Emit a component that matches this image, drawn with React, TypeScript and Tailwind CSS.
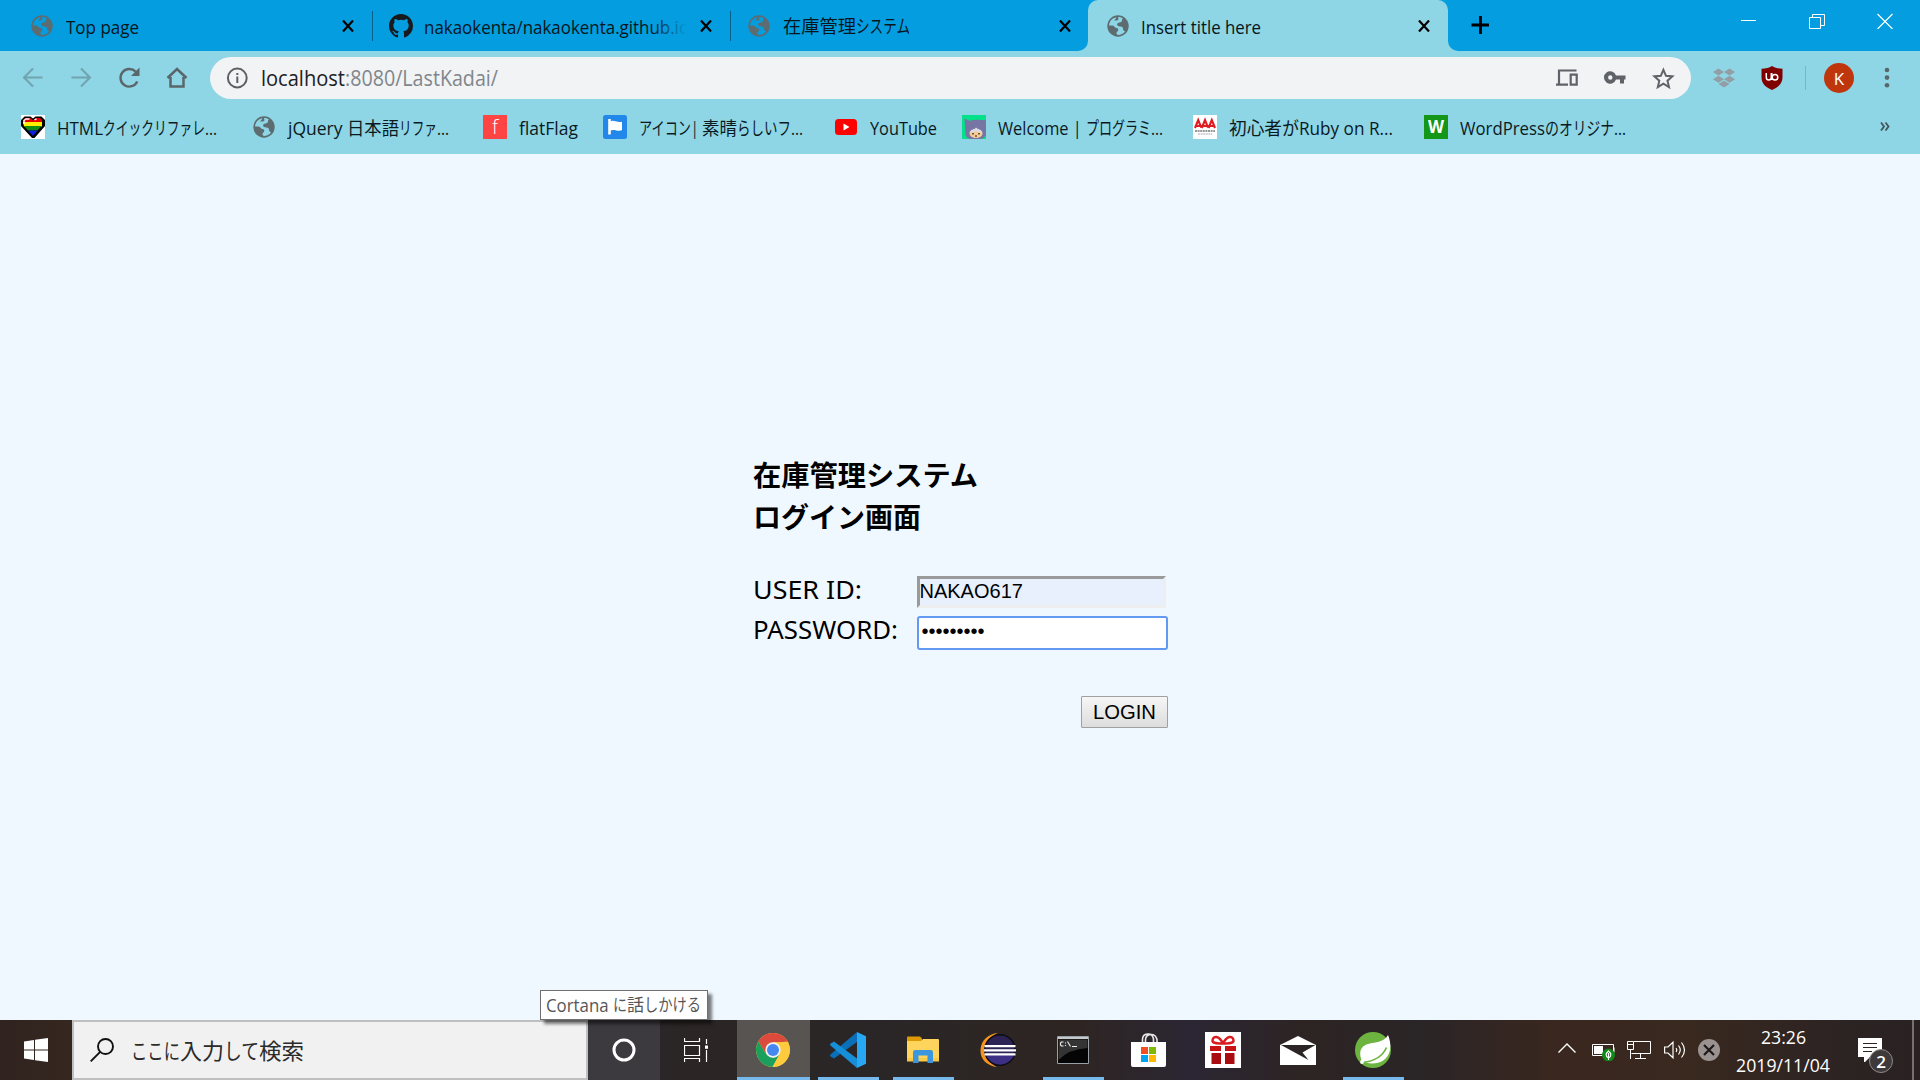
import React, { useLayoutEffect, useRef } from 'react';

/* One text run, condensed or widened to fill the width that its class sets. */
function Run({ t, className = '' }: { t: string; className?: string }) {
  const outer = useRef<HTMLSpanElement>(null);
  const inner = useRef<HTMLSpanElement>(null);
  useLayoutEffect(() => {
    const o = outer.current;
    const i = inner.current;
    if (!o || !i) return;
    i.style.transform = 'none';
    const w = i.getBoundingClientRect().width;
    if (w > 0) i.style.transform = `scaleX(${o.clientWidth / w})`;
  }, []);
  return (
    <span ref={outer} className={`block shrink-0 ${className}`}>
      <span ref={inner} className="inline-block origin-left whitespace-pre">{t}</span>
    </span>
  );
}

const ui = "font-['Open_Sans','Noto_Sans_CJK_JP',sans-serif]";

function Icon({ children, className = '', box = '0 0 24 24' }: { children: React.ReactNode; className?: string; box?: string }) {
  return (
    <svg viewBox={box} className={`block shrink-0 ${className}`} fill="none">
      {children}
    </svg>
  );
}

function Globe({ land = '#8ed5e5' }: { land?: string }) {
  return (
    <Icon className="size-6">
      <circle cx="12" cy="12" r="10.7" fill="#5d6c71" />
      <path
        d="M10.2 3.2C6.300 4 3.300 7.300 3 11.500h3.500c2 0 2.200 2.600 4.200 2.600 1.300 0 1.500 1 1.500 2.100 0 1.300-1.700 1.200-1.700 2.700 0 1 .7 1.700 1.500 2 2.700 0 5.400-1.400 7-3.500-1.400-.5-2-1.500-2-2.800 0-1.500-1.200-2.100-2.500-2.200-2-.1-3.300-.4-3.400-2 0-1.300 1.200-1.900 2.200-2 1.700-.2 2.500-.8 2.700-2 .1-.9.200-1.600.9-2.100-1.500-.9-3.300-1.400-4.900-1.400l.4 1.800c.1 1-.6 1.700-1.700 1.700H8.400V6c.8-.5 1.500-1.500 1.800-2.800z"
        fill={land}
      />
    </Icon>
  );
}

function Close() {
  return (
    <Icon className="size-3" box="0 0 12 12">
      <path d="M1 .5l10 11M11 .5L1 11.500" stroke="#000" strokeWidth="2.200" />
    </Icon>
  );
}

function Tabs() {
  return (
    <div className={`flex h-[51px] bg-[#039de0] text-[18px] leading-6 text-[#06161c] ${ui}`}>
      <div className="flex w-[372px] items-center pr-[18px] pl-[30px]">
        <Globe land="#039de0" />
        <Run t="Top page" className="ml-3 w-[73px] pt-0.5" />
        <div className="ml-auto"><Close /></div>
      </div>
      <div className="mt-[11px] h-[30px] w-px bg-[#08608a]" />
      <div className="flex w-[357px] items-center pr-[18px] pl-4">
        <Icon className="size-6" box="0 0 16 16">
          <path
            fill="#181a1d"
            d="M8 0C3.580 0 0 3.580 0 8c0 3.540 2.290 6.530 5.470 7.590.4.070.55-.17.55-.38 0-.19-.01-.82-.01-1.490-2.010.37-2.530-.49-2.690-.94-.09-.23-.48-.94-.82-1.130-.28-.15-.68-.52-.01-.53.63-.01 1.080.58 1.230.82.72 1.210 1.870.87 2.330.66.070-.52.280-.87.510-1.070-1.780-.2-3.640-.89-3.640-3.950 0-.87.310-1.590.82-2.150-.08-.2-.36-1.020.08-2.120 0 0 .67-.21 2.200.82a7.600 7.600 0 0 1 4 0c1.530-1.040 2.200-.82 2.200-.82.44 1.100.16 1.920.08 2.120.51.56.82 1.270.82 2.150 0 3.070-1.870 3.750-3.650 3.950.29.25.54.73.54 1.480 0 1.070-.01 1.930-.01 2.200 0 .21.150.46.550.38A8.010 8.010 0 0 0 16 8c0-4.420-3.580-8-8-8z"
          />
        </Icon>
        <div className="relative ml-[11px] pt-0.5">
          <Run t="nakaokenta/nakaokenta.github.ic" className="w-[263px]" />
          <div className="absolute top-0 right-0 h-7 w-9 bg-gradient-to-r from-transparent to-[#039de0]" />
        </div>
        <div className="ml-auto"><Close /></div>
      </div>
      <div className="mt-[11px] h-[30px] w-px bg-[#08608a]" />
      <div className="flex h-[51px] w-[357px] items-center pr-[17px] pl-4">
        <Globe land="#039de0" />
        <div className="ml-3 flex pt-px text-[18px]">
          <Run t="在庫管理" className="w-[73px]" />
          <Run t="システム" className="w-[54px]" />
        </div>
        <div className="ml-auto"><Close /></div>
      </div>
      <div className="flex w-[360px] items-center bg-[#8ed5e5] pr-[18px] pl-[18px]">
        <Globe />
        <Run t="Insert title here" className="ml-[11px] w-[120px] pt-0.5" />
        <div className="ml-auto"><Close /></div>
      </div>
      <div className="flex flex-1 bg-[#8ed5e5]">
        <div className="flex flex-1 items-start rounded-bl-[10px] bg-[#039de0]">
          <Icon className="mt-4 ml-[23px] size-[18px]" box="0 0 18 18">
            <path d="M9.500 0v18M.5 9h18" stroke="#000" strokeWidth="2.800" />
          </Icon>
          <Icon className="mt-[13px] ml-auto h-4 w-4" box="0 0 16 16">
            <path d="M0 7.500h15" stroke="#fff" />
          </Icon>
          <Icon className="mt-[13px] ml-[52px] h-4 w-4" box="0 0 16 16">
            <path d="M.5 4.500h11v11H.5zM3.500 4.500v-3h12v11h-4" stroke="#fff" />
          </Icon>
          <Icon className="mt-[13px] mr-[27px] ml-[52px] h-4 w-4" box="0 0 16 16">
            <path d="M.5 1l15 15M15.500 1L.5 16" stroke="#fff" strokeWidth="1.200" />
          </Icon>
        </div>
      </div>
    </div>
  );
}

/* Rounded outside corners where the active tab meets the strip. */
function TabCorners() {
  return (
    <>
      <Icon className="absolute top-0 left-[1088px] h-[51px] w-[10px]" box="0 0 10 51">
        <path d="M0 0h10A10 10 0 0 0 0 10z" fill="#039de0" />
      </Icon>
      <Icon className="absolute top-0 left-[1078px] h-[51px] w-[10px]" box="0 0 10 51">
        <path d="M10 41v10H0a10 10 0 0 0 10-10z" fill="#8ed5e5" />
      </Icon>
      <Icon className="absolute top-0 left-[1438px] h-[51px] w-[10px]" box="0 0 10 51">
        <path d="M0 0h10v10A10 10 0 0 0 0 0z" fill="#039de0" />
      </Icon>
    </>
  );
}

function Toolbar() {
  return (
    <div className={`flex h-[54px] items-center bg-[#8ed5e5] pl-[21px] ${ui}`}>
      <Icon className="size-6"><path d="M21.500 11.500H3M12 2.500l-9 9 9 9" stroke="#70a4ae" strokeWidth="2.100" /></Icon>
      <Icon className="ml-6 size-6"><path d="M2.500 11.500H21M12 2.500l9 9-9 9" stroke="#70a4ae" strokeWidth="2.100" /></Icon>
      <Icon className="ml-6 size-6">
        <path d="M20.300 15.500a8.800 8.800 0 1 1-1.600-9.800" stroke="#5b666b" strokeWidth="2.400" />
        <path d="M22.500 1.500v8.500H14z" fill="#5b666b" />
      </Icon>
      <Icon className="ml-6 size-6">
        <path d="M5.500 11v9.500h13V11M2.500 12L12 3l9.500 9" stroke="#5b666b" strokeWidth="2.500" />
      </Icon>
      <div className="ml-[21px] flex h-[42px] w-[1481px] items-center rounded-full bg-[#f1f3f5] pl-[15px] text-[21px] leading-[28px]">
        <Icon className="size-6">
          <circle cx="12.300" cy="12" r="9.400" stroke="#5b6065" strokeWidth="2" />
          <path d="M12.300 10.500v6.500M12.300 7v2" stroke="#5b6065" strokeWidth="2" />
        </Icon>
        <Run t="localhost" className="ml-3 w-[84px] text-[#202124]" />
        <Run t=":8080/LastKadai/" className="w-[153px] text-[#80868b]" />
        <Icon className="ml-auto size-6">
          <path d="M21.500 4.500H4v14M1 18.600h12" stroke="#5f6368" strokeWidth="2.200" />
          <path d="M15.700 8.600h6v10h-6z" stroke="#5f6368" strokeWidth="2.200" />
        </Icon>
        <Icon className="ml-6 size-6">
          <path d="M13 9.500A6.200 6.200 0 1 0 13 13.500H17v4h4v-4h1.500v-4zM7.300 13.700a2.200 2.200 0 1 1 0-4.400 2.200 2.200 0 0 1 0 4.400z" fill="#5f6368" fillRule="evenodd" />
        </Icon>
        <Icon className="mr-4 ml-6 size-6">
          <path d="M12.400 3.800l2.600 6 6.400.6-4.900 4.300 1.500 6.400-5.600-3.400-5.600 3.400 1.500-6.400-4.900-4.300 6.400-.6z" stroke="#5f6368" strokeWidth="2" />
        </Icon>
      </div>
      <Icon className="ml-[21px] size-6">
        <path d="M6.500 2.500l5.500 3.500-5.500 3.500L1 6zM17.500 2.500L23 6l-5.500 3.500L12 6zM6.500 9.800l5.500 3.500-5.500 3.500L1 13.300zM17.500 9.800l5.500 3.500-5.500 3.500-5.500-3.500zM12 14.800l5.500 3.200-5.500 3.500L6.500 18z" fill="#929ea3" />
      </Icon>
      <Icon className="ml-6 size-6">
        <path d="M12 0c3 2 6 2.700 10.500 2.700V11c0 6-3.500 10-10.500 13C5 21 1.500 17 1.500 11V2.700C6 2.700 9 2 12 0z" fill="#800000" />
        <path d="M6.300 7v4.500a2.500 2.500 0 0 0 5 0V7M11.800 7v7" stroke="#fff" strokeWidth="1.500" />
        <circle cx="15" cy="11.300" r="2.800" stroke="#fff" strokeWidth="1.500" />
      </Icon>
      <div className="ml-[21px] h-6 w-px bg-[#79b4c0]" />
      <div className="ml-[18px] flex size-[30px] items-center justify-center rounded-full bg-[#bf360c] text-[17px] leading-none text-white">K</div>
      <Icon className="ml-[21px] size-6">
        <circle cx="12" cy="4" r="2.300" fill="#5b666b" />
        <circle cx="12" cy="11.600" r="2.300" fill="#5b666b" />
        <circle cx="12" cy="19.200" r="2.300" fill="#5b666b" />
      </Icon>
    </div>
  );
}

function Heart() {
  return (
    <Icon className="size-6">
      <path d="M0 0h24v24H0z" fill="#fff" />
      <path d="M3.500 1.500h6l2.500 2 2.500-2h6L24 5v6L13.500 23h-2.500L0 11V5z" fill="#000" />
      <path d="M4 3h5.500L12 5.500 14.500 3H19l2 2v2H2V5z" fill="#e80000" />
      <path d="M2 7h19v4.500H3z" fill="#ffee00" />
      <path d="M3 11h17.500l-4 4.500H7z" fill="#128c12" />
      <path d="M7 15.500h9.500L12 21z" fill="#1020dd" />
      <path d="M3 9V5.500L5 4h3.500M13.500 5l2-1.200" stroke="#fff" strokeWidth="1.400" />
    </Icon>
  );
}

function Bookmarks() {
  const dots = <Run t="..." className="w-[12px]" />;
  return (
    <div className={`flex h-[49px] bg-[#8ed5e5] pl-[21px] text-[18px] leading-6 text-[#0b1a1f] ${ui}`}>
      <div className="flex w-[231px] items-center pb-1.5">
        <Heart />
        <div className="ml-3 flex pt-0.5">
          <Run t="HTML" className="w-[46px]" />
          <Run t="クイックリファレ" className="w-[102px]" />
          {dots}
        </div>
      </div>
      <div className="flex w-[231px] items-center pb-1.5">
        <Globe />
        <div className="ml-3 flex pt-0.5">
          <Run t="jQuery " className="w-[59px]" />
          <Run t="日本語" className="w-[52px]" />
          <Run t="リファ" className="w-[38px]" />
          {dots}
        </div>
      </div>
      <div className="flex w-[120px] items-center pb-1.5">
        <div className="flex size-6 items-center justify-center bg-[#ff4444] text-[20px] leading-6 font-light text-white">f</div>
        <Run t="flatFlag" className="ml-3 w-[59px] pt-0.5" />
      </div>
      <div className="flex w-[231px] items-center pb-1.5">
        <Icon className="size-6">
          <rect width="24" height="24" rx="2.500" fill="#2188ea" />
          <path d="M6.500 4v15.500" stroke="#fff" strokeWidth="2.600" />
          <path d="M7 6.500c4-2 6 1.200 12 .2v8.600c-5 1.400-7-1.600-12 .2z" fill="#fff" />
        </Icon>
        <div className="ml-3 flex pt-0.5">
          <Run t="アイコン" className="w-[52px]" />
          <Run t="| " className="w-[11px]" />
          <Run t="素晴" className="w-[35px]" />
          <Run t="らしいフ" className="w-[54px]" />
          {dots}
        </div>
      </div>
      <div className="flex w-[128px] items-center pb-1.5">
        <Icon className="size-6">
          <rect x="1" y="4" width="22" height="16" rx="3.500" fill="#f00" />
          <path d="M9.500 8.500v7l6-3.500z" fill="#fff" />
        </Icon>
        <Run t="YouTube" className="ml-3 w-[67px] pt-0.5" />
      </div>
      <div className="flex w-[231px] items-center pb-1.5">
        <Icon className="size-6">
          <path d="M0 0h24v24H0z" fill="#05e08a" />
          <path d="M2.500 3.500l5 2.200c5-1.500 10-1 16.500-.5v14c0 2-3 4.500-5 4.800H8c-3-.8-4.500-3-4.500-5z" fill="#7775a3" />
          <ellipse cx="14" cy="18.500" rx="6.500" ry="4.500" fill="#f3cc96" />
          <path d="M7.500 17.500c1.500-3.500 4-2 6.500-5 2.500 2.500 5 1.500 6.500 5-3 .5-4-1-6.500-1.500-2.500.5-3.500 2-6.500 1.500z" fill="#dcdaea" />
          <path d="M10 18.700h2M16 18.700h2M13 21h2" stroke="#76523c" strokeWidth="1.500" />
        </Icon>
        <div className="ml-3 flex pt-0.5">
          <Run t="Welcome | " className="w-[88px]" />
          <Run t="プログラミ" className="w-[65px]" />
          {dots}
        </div>
      </div>
      <div className="flex w-[231px] items-center pb-1.5">
        <Icon className="size-6">
          <path d="M0 0h24v24H0z" fill="#fff" />
          <path d="M2 13l3.200-8 3 7.500M8.800 13L12 5l3 7.500M15.600 13l3.200-8L22 13M2 11h20" stroke="#e01b22" strokeWidth="2.100" />
          <path d="M2 16h20" stroke="#777" strokeWidth="1.400" strokeDasharray="2 .6" />
          <path d="M5 19h14" stroke="#aaa" strokeWidth="1.200" strokeDasharray="2 .6" />
        </Icon>
        <div className="ml-3 flex pt-0.5">
          <Run t="初心者" className="w-[53px]" />
          <Run t="が" className="w-[17px]" />
          <Run t="Ruby on R..." className="w-[94px]" />
        </div>
      </div>
      <div className="flex flex-1 items-center pb-1.5">
        <div className="flex size-6 items-center justify-center bg-[#149618] text-[17px] leading-6 font-bold text-white">
          <Run t="W" className="w-4" />
        </div>
        <div className="ml-3 flex pt-0.5">
          <Run t="WordPress" className="w-[85px]" />
          <Run t="の" className="w-[14px]" />
          <Run t="オリジナ" className="w-[55px]" />
          {dots}
        </div>
        <Icon className="mr-[30px] ml-auto h-[9px] w-[10px]" box="0 0 10 9">
          <path d="M1 .5l3 4-3 4M5.500.5l3 4-3 4" stroke="#43565c" strokeWidth="1.800" />
        </Icon>
      </div>
    </div>
  );
}

function Login() {
  return (
    <main className="flex h-[866px] justify-center bg-[#f0f8ff]">
      <div className="w-[415px] pt-[299px] text-black">
        <h1 className="font-['Noto_Sans_CJK_JP',sans-serif] text-[28px] leading-[42px] font-bold">
          <Run t="在庫管理システム" className="w-[225px]" />
          <Run t="ログイン画面" className="w-[168px]" />
        </h1>
        <div className="mt-[39px] flex h-8">
          <Run t="USER ID:" className="w-[109px] font-['Noto_Sans',sans-serif] text-[25px] leading-[26px]" />
          <div className="ml-[55px] h-8 w-[249px] border-[3px] border-t-[#9a9a9a] border-r-[#eeeeee] border-b-[#eeeeee] border-l-[#9a9a9a] bg-[#e8f0fe] font-['Liberation_Sans',sans-serif] text-[20px] leading-[24px]">
            NAKAO617
          </div>
        </div>
        <div className="mt-2 flex h-[34px]">
          <Run t="PASSWORD:" className="w-[145px] font-['Noto_Sans',sans-serif] text-[25px] leading-[27px]" />
          <div className="ml-[19px] h-[34px] w-[251px] rounded-[3px] border-2 border-[#6499f2] bg-white pl-[3px] font-['Liberation_Sans',sans-serif] text-[20px] leading-[27px]">
            •••••••••
          </div>
        </div>
        <div className="mt-[46px] flex justify-end">
          <button className="h-8 w-[87px] rounded-[1px] border border-[#a0a0a0] bg-gradient-to-b from-[#f6f6f6] to-[#dddddd] font-['Liberation_Sans',sans-serif] text-[20px] leading-[29px]">
            <Run t="LOGIN" className="mx-auto w-[63px]" />
          </button>
        </div>
      </div>
    </main>
  );
}

function TaskItem({ children, open = false, active = false }: { children: React.ReactNode; open?: boolean; active?: boolean }) {
  return (
    <div className={`flex h-full shrink-0 flex-col items-center ${active ? 'mr-[0.5px] w-[73px] bg-[#585451]' : 'w-[75px]'}`}>
      <div className={`flex flex-1 items-center pt-[3px] ${active ? 'pr-px' : ''}`}>{children}</div>
      <div className={`h-[3px] ${active ? 'w-full' : 'w-[61px]'} ${open ? 'bg-[#76b9ed]' : ''}`} />
    </div>
  );
}

function Taskbar() {
  return (
    <div className={`flex h-[60px] bg-[linear-gradient(90deg,#30231f_0%,#36271f_4%,#29242a_31%,#2b2625_36%,#2a2627_46%,#2e2522_56%,#2b2633_62%,#2d2423_68%,#2a2527_74%,#3a271f_81%,#39291f_88%,#2c2323_96%,#2a2222_100%)] ${ui}`}>
      <div className="flex w-[72px] shrink-0 items-center justify-center">
        <Icon className="size-6">
          <path d="M0 3.400l10-1.400v9.500H0zM11 1.800L24 0v11.500H11zM0 12.500h10V22L0 20.600zM11 12.500h13V24l-13-1.800z" fill="#fff" />
        </Icon>
      </div>
      <div className="flex w-[516px] shrink-0 items-center border-2 border-[#bfbfbf] bg-[#f1f1f1] pl-4">
        <Icon className="size-6">
          <circle cx="15.500" cy="8.500" r="7.500" stroke="#111" strokeWidth="1.900" />
          <path d="M10.200 13.800L.7 23.300" stroke="#111" strokeWidth="1.900" />
        </Icon>
        <div className="ml-[17px] flex text-[22px] leading-8 text-[#2b2b2b]">
          <Run t="ここに" className="w-[49px]" />
          <Run t="入力" className="w-[44px]" />
          <Run t="して" className="w-[35px]" />
          <Run t="検索" className="w-[45px]" />
        </div>
      </div>
      <div className="flex w-[72px] shrink-0 items-center justify-center bg-[#3c393f]">
        <Icon className="size-6"><circle cx="12" cy="12" r="10" stroke="#fff" strokeWidth="3" /></Icon>
      </div>
      <div className="flex w-[77px] shrink-0 items-center pl-6">
        <Icon className="size-6">
          <path d="M.5 0v3.500h15V0M.5 7.500h15v10H.5zM.5 24v-3.500h15V24M22.500 1v5M22.500 12v12" stroke="#fff" strokeWidth="1.200" />
          <path d="M21 7.500h3v3.300h-3z" fill="#fff" />
        </Icon>
      </div>
      <TaskItem open active>
        <Icon className="size-[34px]" box="-17 -17 34 34">
          <circle r="17" fill="#fbc93b" />
          <path d="M-14.700-8.500A17 17 0 0 1 14.700-8.500L7.500-7.800H0L-7 4z" fill="#db4a3c" />
          <path d="M-14.700-8.500L-7 4 0 7.800 6.500 4.500-.5 17A17 17 0 0 1-14.700-8.500z" fill="#1a9f5c" />
          <path d="M0-7.800h15A17 17 0 0 1-.5 17L6.700 4z" fill="#fdcb3d" />
          <circle r="7.700" fill="#f2f2f2" />
          <circle r="6" fill="#4688f1" />
        </Icon>
      </TaskItem>
      <TaskItem open>
        <Icon className="size-9" box="0 0 36 36">
          <path d="M4 26.500l-3.300-2q-1.200-1 0-2.200L27 0v10z" fill="#0a6fb8" />
          <path d="M4 9.400l-3.300 2q-1.200 1.100 0 2.300L27 36v-9.500z" fill="#168fd8" />
          <path d="M27 0l9 4.200v27.600L27 36z" fill="#28a7f2" />
        </Icon>
      </TaskItem>
      <TaskItem open>
        <Icon className="h-7 w-8" box="0 0 32 28">
          <path d="M0 1.500q0-1 1-1h12l2 2v4H0z" fill="#dd9a05" />
          <path d="M0 5h14l2-2h15q1 0 1 1v21H0z" fill="#ffd45c" />
          <path d="M0 22h32v3.500H0z" fill="#f8c948" />
          <path d="M6 27V17q0-3 2-3h16q2 0 2 3v10h-5.500v-7.500h-9V27z" fill="#3a96dd" />
        </Icon>
      </TaskItem>
      <TaskItem>
        <Icon className="size-9" box="0 0 36 36">
          <path d="M18 1C8 2 1 8 .5 18S8 34 17 35C9 31 5 25 5 18S9 5 18 1z" fill="#f7941e" />
          <circle cx="20" cy="18" r="16" fill="#0c0c12" />
          <circle cx="20" cy="18" r="14.500" fill="#2c2255" />
          <path d="M6 23h28c-2 5.500-8 9.500-14 9.500S8 28 6 23z" fill="#3d2f85" />
          <path d="M4.500 14.200h31M4 18.300h32M4.500 22.400h31" stroke="#fff" strokeWidth="2.200" />
        </Icon>
      </TaskItem>
      <TaskItem open>
        <Icon className="h-7 w-8" box="0 0 32 28">
          <path d="M.5.500h31v27H.5z" fill="#050505" stroke="#9aa1a6" />
          <path d="M1 1h30v2H1z" fill="#c4c9cc" />
          <path d="M1.500 3.500h29V12Q12 13 1.500 24z" fill="#343434" />
          <path d="M6.500 6h-2l-1 1v2l1 1h2M8.500 6.500v1M8.500 9v1M10.500 5.500l3 5M15 10.500h5" stroke="#eee" strokeWidth="1.100" />
        </Icon>
      </TaskItem>
      <TaskItem>
        <Icon className="h-[34px] w-[35px]" box="0 0 35 34">
          <path d="M11.500 10V6.500q0-5 5-5.500t6 5V10M14.500 10V7q0-5 5-5.500T26 6.500V10" stroke="#e7e7e7" strokeWidth="1.600" />
          <path d="M0 9h35v23q0 2-2 2H2q-2 0-2-2z" fill="#fff" />
          <path d="M10 14h7v7h-7z" fill="#f25022" />
          <path d="M18 14h7v7h-7z" fill="#7fba00" />
          <path d="M10 22h7v7h-7z" fill="#00a4ef" />
          <path d="M18 22h7v7h-7z" fill="#ffb900" />
        </Icon>
      </TaskItem>
      <TaskItem>
        <Icon className="size-9" box="0 0 36 36">
          <path d="M0 0h36v36H0z" fill="#fff" />
          <path d="M5 14h11v5H5zM20 14h11v5H20z" fill="#c81316" />
          <path d="M6.500 21H16v11H6.500zM20 21h9.500v11H20z" fill="#a90d10" />
          <path d="M18 11.500C14 3 8 3.500 7.500 8.500c0 3 4 3 10.500 3zM18 11.500c4-8.500 10-8 10.500-3 0 3-4 3-10.500 3z" stroke="#d81c1f" strokeWidth="2.500" />
        </Icon>
      </TaskItem>
      <TaskItem>
        <Icon className="h-[29px] w-9" box="0 0 36 29">
          <path d="M0 9L18 0l18 9v20H0z" fill="#fff" />
          <path d="M1 9h34.500L22.500 16.500 28.500 24z" fill="#2b2526" />
        </Icon>
      </TaskItem>
      <TaskItem open>
        <Icon className="size-9" box="0 0 36 36">
          <circle cx="18" cy="18" r="18" fill="#6db33f" />
          <path d="M33 3c5 12 2 24-9 27.500-7 1.800-13 .5-17-1C3 20 6 14 13 12c8-2 16-1.500 20-9z" fill="#fff" />
          <path d="M8 30.500c9-1 19-5 23.500-15" stroke="#6db33f" strokeWidth="1.700" />
          <circle cx="7" cy="30" r="1.900" fill="#fff" />
        </Icon>
      </TaskItem>
      <div className="flex min-w-0 flex-1 items-center justify-end text-white">
        <Icon className="mt-[-4px] h-[10px] w-[18px]" box="0 0 18 10"><path d="M.5 9.500L9 1l8.500 8.500" stroke="#fff" strokeWidth="1.400" /></Icon>
        <Icon className="ml-4 h-[22px] w-6" box="0 0 24 22">
          <path d="M.5 5.500h21v11H.5zM22 8.500v5" stroke="#fff" />
          <path d="M2 7h9v8H2z" fill="#fff" />
          <circle cx="16.500" cy="16" r="6.500" fill="#10891a" />
          <path d="M16.500 12c-3 2.500-3.300 5 0 7 3.300-2 3-4.500 0-7zM16.500 14v7" stroke="#fff" strokeWidth="1.100" />
        </Icon>
        <Icon className="ml-[11px] h-5 w-6" box="0 0 24 20">
          <path d="M7 1.500h16.500v12H4.500M.5 1.500h6v8h-6zM.5 4.500h6M3.500 9.500V19M13.500 14v4M8 18.500h11" stroke="#fff" />
        </Icon>
        <Icon className="ml-[13px] h-5 w-[22px]" box="0 0 22 20">
          <path d="M.6 7v6H4l5 4.800V2.200L4 7zM12 8q1.500 2 0 4M14.500 5.500q3.500 4.500 0 9M17.500 2.500q6 7.500 0 15" stroke="#fff" strokeWidth="1.200" />
        </Icon>
        <Icon className="ml-3 size-[22px]" box="0 0 22 22">
          <circle cx="11" cy="11" r="11" fill="#9a9290" />
          <path d="M6 6l10 10M16 6L6 16" stroke="#1e1919" strokeWidth="2.200" />
        </Icon>
        <div className="ml-4 flex w-[94px] flex-col items-center pt-px text-[18px] leading-7">
          <Run t="23:26" className="w-[45px]" />
          <Run t="2019/11/04" className="w-[94px]" />
        </div>
        <div className="relative ml-[28px] h-6 w-6">
          <Icon className="size-6">
            <path d="M0 0h24v19H12l-6 6v-6H0z" fill="#fff" />
            <path d="M5 5.500h14M5 9.500h14M5 13.500h9" stroke="#2c2323" strokeWidth="1.200" />
          </Icon>
          <div className="absolute top-[11px] left-[11px] flex size-6 items-center justify-center rounded-full border border-[#8f8a88] bg-[#3e3a3b] text-[17px] leading-none font-semibold">2</div>
        </div>
        <div className="mr-[6px] ml-[30px] h-full w-[2px] bg-[#76706f]" />
      </div>
    </div>
  );
}

export default function App() {
  return (
    <div className="relative h-[1080px] w-[1920px] overflow-hidden">
      <Tabs />
      <TabCorners />
      <Toolbar />
      <Bookmarks />
      <Login />
      <Taskbar />
      <div className={`absolute top-[990px] left-[540px] flex h-[30px] w-[168px] items-center border border-[#6f6f6f] bg-white pl-[5px] text-[17px] leading-6 text-[#575757] shadow-[4px_4px_3px_rgba(0,0,0,0.5)] ${ui}`}>
        <Run t="Cortana " className="w-[67px] text-[18px]" />
        <Run t="に" className="w-[14px]" />
        <Run t="話" className="w-[17px]" />
        <Run t="しかける" className="w-[57px]" />
      </div>
    </div>
  );
}
